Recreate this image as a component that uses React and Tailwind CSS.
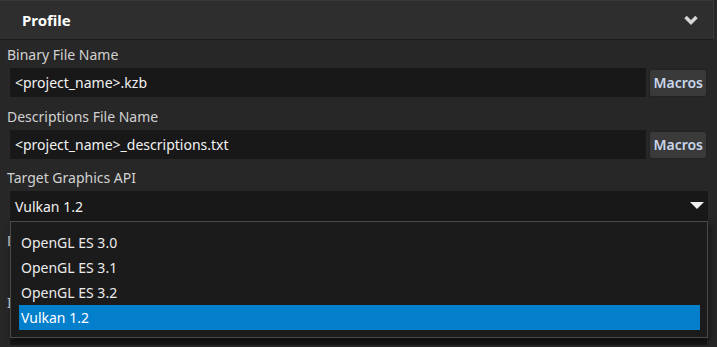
import React from "react";

const font = { fontFamily: '"Noto Sans", "Open Sans", sans-serif' };

const Field = ({ label, value, macros }) => (
  <div className="flex flex-col pb-[5px]">
    <div className="h-[28px] flex items-center pl-[7px] text-[14px] text-[#d2d2d2]">{label}</div>
    <div className="flex items-center pl-[10px] pr-[10px] gap-[3px]">
      <div className="flex-1 h-[29px] bg-[#181818] flex items-center pl-[5px] text-[14px] text-[#f2f2f2]">
        {value}
      </div>
      {macros && (
        <button className="h-[28px] px-[3px] rounded-[3px] bg-[#3a3a3a] border border-[#222] text-[14px] font-semibold text-[#c9d6ea]">
          Macros
        </button>
      )}
    </div>
  </div>
);

export default function App() {
  const items = ["OpenGL ES 3.0", "OpenGL ES 3.1", "OpenGL ES 3.2", "Vulkan 1.2"];
  return (
    <div className="w-[717px] h-[347px] bg-[#272727] overflow-hidden relative" style={font}>
      <div className="h-[40px] mr-[3px] bg-[#2e2e2e] border-t border-r border-[#383838] border-b-[#1c1c1c] border-b flex items-center justify-between pl-[22px] pr-[14px]">
        <span className="text-[15px] font-bold text-white">Profile</span>
        <svg width="16" height="12" viewBox="0 0 16 12">
          <polyline points="2.5,3 8,8.5 13.5,3" fill="none" stroke="#d6d6d6" strokeWidth="3.5" />
        </svg>
      </div>
      <Field label="Binary File Name" value="<project_name>.kzb" macros />
      <Field label="Descriptions File Name" value="<project_name>_descriptions.txt" macros />
      <div className="flex flex-col pb-[5px]">
        <div className="h-[27px] flex items-center pl-[7px] text-[14px] text-[#d2d2d2]">Target Graphics API</div>
        <div className="ml-[10px] mr-[9px] h-[30px] bg-[#181818] flex items-center justify-between pl-[5px] pr-[4px] text-[14px] text-[#f2f2f2]">
          <span>Vulkan 1.2</span>
          <svg width="14" height="8" viewBox="0 0 14 8">
            <polygon points="0,0 14,0 7,7" fill="#f0f0f0" />
          </svg>
        </div>
      </div>
      <Field label="Default Material" value="" />
      <Field label="Include Assets" value="" />

      <div className="absolute left-[10px] top-[221px] w-[698px] h-[117px] bg-[#1b1b1b] border border-[#4a4a4a] shadow-[2px_3px_6px_rgba(0,0,0,0.5)] pt-[8px] pl-[8px] pr-[7px]">
        {items.map((it, i) => (
          <div
            key={it}
            className={
              i === 3
                ? "h-[25px] flex items-center pl-[2px] text-[14px] text-white bg-[#037fcc]"
                : "h-[25px] flex items-center pl-[2px] text-[14px] text-[#ececec]"
            }
          >
            {it}
          </div>
        ))}
      </div>
    </div>
  );
}
